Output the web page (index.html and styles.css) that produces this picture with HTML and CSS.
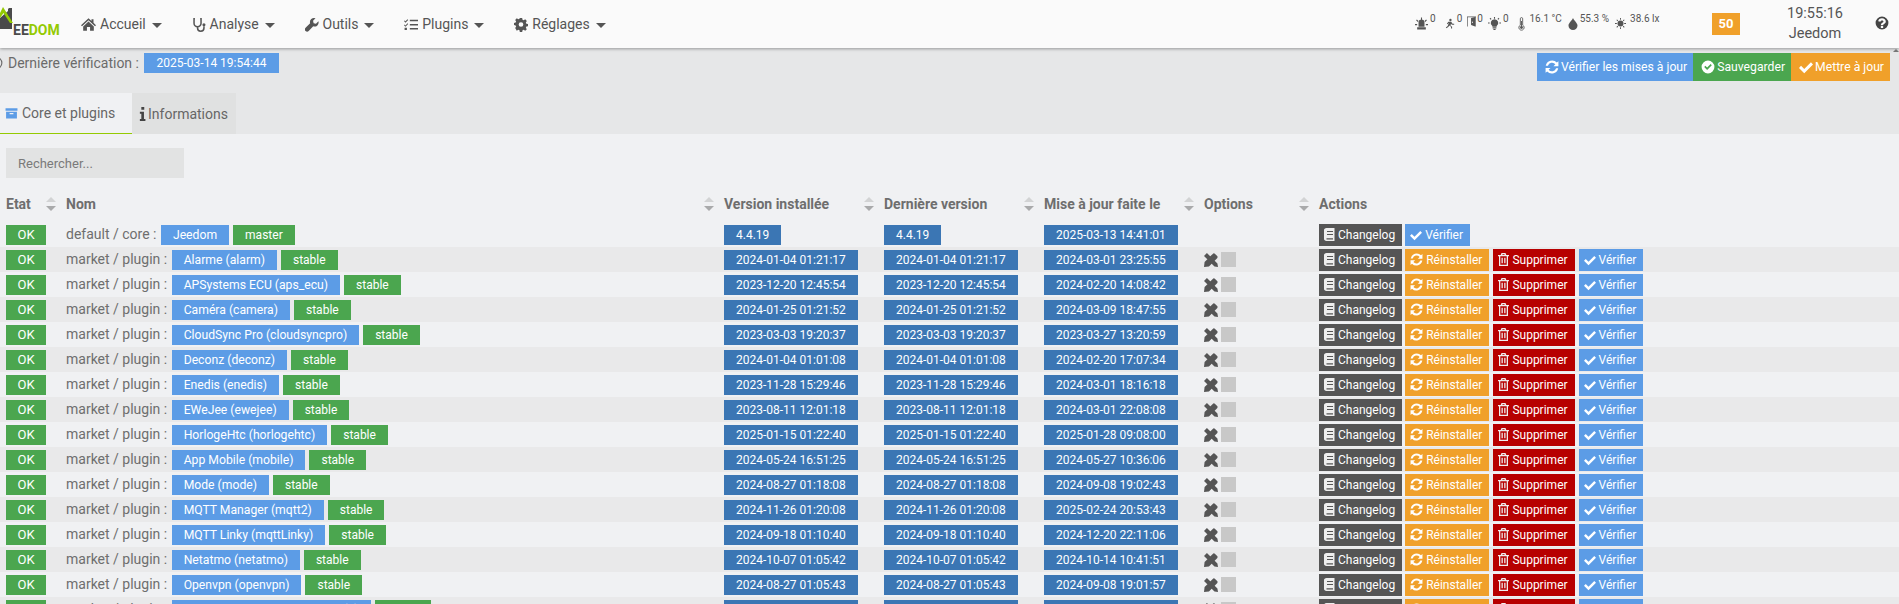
FILE: index.html
```html
<!DOCTYPE html>
<html lang="fr">
<head>
<meta charset="utf-8">
<title>Jeedom - Centre de mise à jour</title>
<link rel="stylesheet" href="styles.css">
</head>
<body>
<svg class="defs" width="0" height="0" aria-hidden="true">
  <defs>
    <symbol id="i-home" viewBox="0 0 24 24"><path d="M12 2 0 13l1.600 1.800L12 5.300l10.400 9.500L24 13l-4-3.700V3.500h-3.200v2.900zM12 7.200 3.500 15v7h6v-6h5v6h6v-7z"/></symbol>
    <symbol id="i-steth" viewBox="0 0 24 24"><path fill="none" stroke="currentColor" stroke-width="2.600" d="M5 2H3.500v8a6 6 0 0 0 12 0V2H14M9.500 16v2a5.500 5.500 0 0 0 11 0v-3"/><circle cx="20.500" cy="12.500" r="2.600"/></symbol>
    <symbol id="i-wrench" viewBox="0 0 24 24"><path d="M23 6.500 18.800 10.700l-4-1-1-4L18 1.300a7 7 0 0 0-9.200 8.600L1 17.700a3.700 3.700 0 0 0 5.300 5.300l7.800-7.800A7 7 0 0 0 23 6.500z"/></symbol>
    <symbol id="i-tasks" viewBox="0 0 24 24"><path d="M10 4h14v2.500H10zM10 11h14v2.500H10zM10 18h14v2.500H10zM1 5l1.500 1.500L6 3l1.200 1.200L2.500 9 0 6.200zM1 12l1.500 1.500L6 10l1.200 1.200-4.700 4.800L0 13.200zM1 17.500h4v4H1z"/></symbol>
    <symbol id="i-cog" viewBox="0 0 24 24"><path fill-rule="evenodd" d="M10 1h4l.6 3 2 .9 2.600-1.700 2.800 2.800-1.700 2.600.9 2 3 .6v3.600l-3 .6-.9 2 1.700 2.600-2.800 2.800-2.600-1.700-2 .9-.6 3h-4l-.6-3-2-.9-2.600 1.700L2 18.100l1.700-2.600-.9-2-3-.6V9.300l3-.6.9-2L2 4.100 4.800 1.300l2.600 1.700 2-.9zM12 8a4 4 0 1 0 0 8 4 4 0 0 0 0-8z"/></symbol>
    <symbol id="i-archive" viewBox="0 0 24 24"><path fill-rule="evenodd" d="M1 3h22v5H1zM2 9.500h20V22H2zM8.500 12v2.500h7V12z"/></symbol>
    <symbol id="i-info" viewBox="0 0 12 24"><path d="M4 0h5v4.500H4zM1.500 8H8.500v12.500H11V24H1.500v-3.500H4V11.500H1.500z"/></symbol>
    <symbol id="i-clock" viewBox="0 0 24 24"><path fill="none" stroke="currentColor" stroke-width="2" d="M12 2a10 10 0 1 0 0 20 10 10 0 0 0 0-20zM12 6v6l4 2"/></symbol>
    <symbol id="i-sync" viewBox="0 0 24 24"><path d="M23 2v8.500h-8.500l3.300-3.300A7.500 7.500 0 0 0 5 10H1.300a11.200 11.200 0 0 1 19-5.700zM1 22v-8.500h8.500l-3.300 3.300A7.500 7.500 0 0 0 19 14h3.700a11.200 11.200 0 0 1-19 5.700z"/></symbol>
    <symbol id="i-check" viewBox="0 0 24 24"><path d="M20.500 4 9 15.500 3.500 10 0 13.500l9 9 15-15z"/></symbol>
    <symbol id="i-check-c" viewBox="0 0 24 24"><path fill-rule="evenodd" d="M12 1a11 11 0 1 0 0 22 11 11 0 0 0 0-22zm6.500 8L10.500 17 5.500 12l2-2 3 3 6-6z"/></symbol>
    <symbol id="i-help" viewBox="0 0 24 24"><path fill-rule="evenodd" d="M12 1a11 11 0 1 0 0 22 11 11 0 0 0 0-22zM10 17h4v3.500h-4zm-4.500-8C5.800 6 8.500 4 12 4c3.800 0 6.500 2.400 6.500 5.300 0 2.300-1.500 3.400-3 4.300-1 .6-1.500 1-1.500 2.400h-4c0-2.600 1-3.700 2.500-4.600 1-.6 2-1.100 2-2.100S13.500 7.500 12 7.500c-1.600 0-2.500 1-2.800 2.200z"/></symbol>
    <symbol id="i-book" viewBox="0 0 22 26"><path fill-rule="evenodd" d="M5 0h16v26H5c-3 0-5-2-5-4.500v-17C0 2 2 0 5 0zm1 6v2h12V6zm0 6v2h12v-2zM5 20.500v2.500h13v-2.500z"/></symbol>
    <symbol id="i-trash" viewBox="0 0 22 26"><path fill-rule="evenodd" d="M7 0h8l1.600 4H22v2.600h-2V26H2V6.600H0V4h5.400zm1.600 4h4.800l-.6-1.400H9.200zM4.600 6.600V23.400h12.800V6.600zM7 9.500h2.600v11H7zm5.400 0H15v11h-2.600z"/></symbol>
    <symbol id="i-tools" viewBox="0 0 24 24"><path d="M0 5 5 0l7 7-5 5zM12 17l5-5 6 6 1 6-6-1zM15 1.500a3 3 0 0 1 4 0l3.500 3.500a3 3 0 0 1 0 4L8.500 23 0 24l1-8.500z"/></symbol>
    <symbol id="i-alarm" viewBox="0 0 24 24"><path d="M6.500 10a5.500 5.500 0 0 1 11 0v8h-11zM4 19h16v4H4zM11 1h2v4h-2zM2 6l1.500-1.500 3 3L5 9zM22 6l-1.500-1.500-3 3L19 9zM0 13h4v2H0zM20 13h4v2h-4z"/></symbol>
    <symbol id="i-run" viewBox="0 0 24 24"><circle cx="13" cy="3.500" r="2.800"/><path d="M8 7.500h7l3 5h4v2.500h-5.500l-2-2.500-1.500 4 4 3v4.500h-2.500V20l-4.500-3-1.500 3-5 3.500-1.500-2L6.500 18 9 10.500H8.500L6.500 13.500 4.500 12.500z"/></symbol>
    <symbol id="i-door" viewBox="0 0 20 24"><path d="M0 1h20v22h-1.500V2.500h-17V23H0z"/><path d="M9 4l9-2v21l-9-3zm2 8v3l2 .4v-3z"/></symbol>
    <symbol id="i-bulb" viewBox="0 0 24 24"><path d="M12 4a7 7 0 0 0-4 12.700V18h8v-1.300A7 7 0 0 0 12 4zM8.500 19h7v2h-7zM10 22h4v2h-4zM11 0h2v3h-2zM3 3l1.500-1.500 2 2L5 5zM21 3l-1.500-1.500-2 2L19 5zM0 10h3v2H0zM21 10h3v2h-3z"/></symbol>
    <symbol id="i-thermo" viewBox="0 0 12 24"><path fill="none" stroke="currentColor" stroke-width="1.500" d="M4 14V3a2 2 0 0 1 4 0v11a4.500 4.500 0 1 1-4 0z"/><circle cx="6" cy="18" r="2.500"/><path d="M5.200 7h1.600v10H5.200z"/></symbol>
    <symbol id="i-drop" viewBox="0 0 20 24"><path d="M10 0c2 5 9 10 9 15a9 9 0 0 1-18 0C1 10 8 5 10 0z"/></symbol>
    <symbol id="i-sun" viewBox="0 0 24 24"><circle cx="12" cy="12" r="6.500"/><path d="M11 0h2v4h-2zM11 20h2v4h-2zM0 11h4v2H0zM20 11h4v2h-4zM3 4.500 4.500 3 7 5.500 5.500 7zM17 18.500l1.500-1.500 2.500 2.500-1.500 1.500zM3 19.500 5.500 17 7 18.500 4.500 21zM17 5.500 19.500 3 21 4.500 18.500 7z"/></symbol>
  </defs>
</svg>

<header class="topbar">
  <div class="brand">
    <svg class="brand-house" viewBox="0 0 20 32" aria-hidden="true"><path fill="#4a4a4a" d="M0 18 8 11V9h4v20H0z"/><path fill="#94ca02" d="M0 13 3 7l10 16h-3L3.500 13 0 18z"/><path fill="#4a4a4a" d="M8.500 8H12v8H8.500z"/></svg>
    <span class="brand-name">EE<em>DOM</em></span>
  </div>
  <nav class="menu">
    <a class="menu-item"><svg class="ic ic-menu ic-first"><use href="#i-home"/></svg>Accueil<i class="caret"></i></a>
    <a class="menu-item"><svg class="ic ic-menu"><use href="#i-steth"/></svg>Analyse<i class="caret"></i></a>
    <a class="menu-item"><svg class="ic ic-menu"><use href="#i-wrench"/></svg>Outils<i class="caret"></i></a>
    <a class="menu-item"><svg class="ic ic-menu"><use href="#i-tasks"/></svg>Plugins<i class="caret"></i></a>
    <a class="menu-item"><svg class="ic ic-menu"><use href="#i-cog"/></svg>Réglages<i class="caret"></i></a>
  </nav>
  <div class="sensors">
    <span class="sensor s-wide"><svg class="ic ic-s"><use href="#i-alarm"/></svg><b>0</b></span>
    <span class="sensor"><svg class="ic ic-run"><use href="#i-run"/></svg><b>0</b></span>
    <span class="sensor"><svg class="ic ic-door"><use href="#i-door"/></svg><b class="tight">0</b></span>
    <span class="sensor s-wide"><svg class="ic ic-s"><use href="#i-bulb"/></svg><b>0</b></span>
    <span class="sensor"><svg class="ic ic-thermo"><use href="#i-thermo"/></svg><b class="loose">16.1 °C</b></span>
    <span class="sensor"><svg class="ic ic-drop"><use href="#i-drop"/></svg><b>55.3 %</b></span>
    <span class="sensor"><svg class="ic ic-sun"><use href="#i-sun"/></svg><b class="mid">38.6 lx</b></span>
  </div>
  <span class="msg-badge">50</span>
  <div class="clock"><span>19:55:16</span><span>Jeedom</span></div>
  <svg class="ic ic-help"><use href="#i-help"/></svg>
</header>

<div class="status-row">
  <div class="last-check">
    <svg class="ic ic-clock"><use href="#i-clock"/></svg>
    <span>Dernière vérification :</span>
    <span class="date-tag">2025-03-14 19:54:44</span>
  </div>
  <div class="top-actions">
    <a class="top-btn blue"><svg class="ic"><use href="#i-sync"/></svg>Vérifier les mises à jour</a>
    <a class="top-btn green"><svg class="ic"><use href="#i-check-c"/></svg>Sauvegarder</a>
    <a class="top-btn orange"><svg class="ic"><use href="#i-check"/></svg>Mettre à jour</a>
  </div>
</div>
<i class="scroll-arrow"></i>

<div class="tabs">
  <a class="tab active"><svg class="ic ic-archive"><use href="#i-archive"/></svg>Core et plugins</a>
  <a class="tab"><svg class="ic ic-info"><use href="#i-info"/></svg>Informations</a>
</div>

<main class="pane">
  <input class="search" type="text" placeholder="Rechercher...">
  <table class="updates">
    <colgroup>
      <col class="c-state"><col class="c-name"><col class="c-date"><col class="c-date"><col class="c-date"><col class="c-opt"><col>
    </colgroup>
    <thead>
      <tr>
        <th><div class="th-in">Etat<i class="sort"></i></div></th>
        <th><div class="th-in">Nom<i class="sort"></i></div></th>
        <th><div class="th-in">Version installée<i class="sort"></i></div></th>
        <th><div class="th-in">Dernière version<i class="sort"></i></div></th>
        <th><div class="th-in">Mise à jour faite le<i class="sort"></i></div></th>
        <th><div class="th-in">Options<i class="sort"></i></div></th>
        <th><div class="th-in">Actions</div></th>
      </tr>
    </thead>
    <tbody>
      <tr>
        <td><span class="tag ok">OK</span></td>
        <td>default / core : <span class="tag blue">Jeedom</span><span class="tag green">master</span></td>
        <td><span class="tag steel">4.4.19</span></td>
        <td><span class="tag steel">4.4.19</span></td>
        <td><span class="tag steel">2025-03-13 14:41:01</span></td>
        <td></td>
        <td><a class="btn dark"><svg class="ic ic-tall"><use href="#i-book"/></svg>Changelog</a><a class="btn blue"><svg class="ic"><use href="#i-check"/></svg>Vérifier</a></td>
      </tr>
      <tr>
        <td><span class="tag ok">OK</span></td>
        <td>market / plugin : <span class="tag blue">Alarme (alarm)</span><span class="tag green">stable</span></td>
        <td><span class="tag steel">2024-01-04 01:21:17</span></td>
        <td><span class="tag steel">2024-01-04 01:21:17</span></td>
        <td><span class="tag steel">2024-03-01 23:25:55</span></td>
        <td><div class="opts"><svg class="ic ic-tools"><use href="#i-tools"/></svg><i class="box"></i></div></td>
        <td><a class="btn dark"><svg class="ic ic-tall"><use href="#i-book"/></svg>Changelog</a><a class="btn orange"><svg class="ic ic-sync"><use href="#i-sync"/></svg>Réinstaller</a><a class="btn red"><svg class="ic ic-tall"><use href="#i-trash"/></svg>Supprimer</a><a class="btn blue"><svg class="ic"><use href="#i-check"/></svg>Vérifier</a></td>
      </tr>
      <tr>
        <td><span class="tag ok">OK</span></td>
        <td>market / plugin : <span class="tag blue">APSystems ECU (aps_ecu)</span><span class="tag green">stable</span></td>
        <td><span class="tag steel">2023-12-20 12:45:54</span></td>
        <td><span class="tag steel">2023-12-20 12:45:54</span></td>
        <td><span class="tag steel">2024-02-20 14:08:42</span></td>
        <td><div class="opts"><svg class="ic ic-tools"><use href="#i-tools"/></svg><i class="box"></i></div></td>
        <td><a class="btn dark"><svg class="ic ic-tall"><use href="#i-book"/></svg>Changelog</a><a class="btn orange"><svg class="ic ic-sync"><use href="#i-sync"/></svg>Réinstaller</a><a class="btn red"><svg class="ic ic-tall"><use href="#i-trash"/></svg>Supprimer</a><a class="btn blue"><svg class="ic"><use href="#i-check"/></svg>Vérifier</a></td>
      </tr>
      <tr>
        <td><span class="tag ok">OK</span></td>
        <td>market / plugin : <span class="tag blue">Caméra (camera)</span><span class="tag green">stable</span></td>
        <td><span class="tag steel">2024-01-25 01:21:52</span></td>
        <td><span class="tag steel">2024-01-25 01:21:52</span></td>
        <td><span class="tag steel">2024-03-09 18:47:55</span></td>
        <td><div class="opts"><svg class="ic ic-tools"><use href="#i-tools"/></svg><i class="box"></i></div></td>
        <td><a class="btn dark"><svg class="ic ic-tall"><use href="#i-book"/></svg>Changelog</a><a class="btn orange"><svg class="ic ic-sync"><use href="#i-sync"/></svg>Réinstaller</a><a class="btn red"><svg class="ic ic-tall"><use href="#i-trash"/></svg>Supprimer</a><a class="btn blue"><svg class="ic"><use href="#i-check"/></svg>Vérifier</a></td>
      </tr>
      <tr>
        <td><span class="tag ok">OK</span></td>
        <td>market / plugin : <span class="tag blue">CloudSync Pro (cloudsyncpro)</span><span class="tag green">stable</span></td>
        <td><span class="tag steel">2023-03-03 19:20:37</span></td>
        <td><span class="tag steel">2023-03-03 19:20:37</span></td>
        <td><span class="tag steel">2023-03-27 13:20:59</span></td>
        <td><div class="opts"><svg class="ic ic-tools"><use href="#i-tools"/></svg><i class="box"></i></div></td>
        <td><a class="btn dark"><svg class="ic ic-tall"><use href="#i-book"/></svg>Changelog</a><a class="btn orange"><svg class="ic ic-sync"><use href="#i-sync"/></svg>Réinstaller</a><a class="btn red"><svg class="ic ic-tall"><use href="#i-trash"/></svg>Supprimer</a><a class="btn blue"><svg class="ic"><use href="#i-check"/></svg>Vérifier</a></td>
      </tr>
      <tr>
        <td><span class="tag ok">OK</span></td>
        <td>market / plugin : <span class="tag blue">Deconz (deconz)</span><span class="tag green">stable</span></td>
        <td><span class="tag steel">2024-01-04 01:01:08</span></td>
        <td><span class="tag steel">2024-01-04 01:01:08</span></td>
        <td><span class="tag steel">2024-02-20 17:07:34</span></td>
        <td><div class="opts"><svg class="ic ic-tools"><use href="#i-tools"/></svg><i class="box"></i></div></td>
        <td><a class="btn dark"><svg class="ic ic-tall"><use href="#i-book"/></svg>Changelog</a><a class="btn orange"><svg class="ic ic-sync"><use href="#i-sync"/></svg>Réinstaller</a><a class="btn red"><svg class="ic ic-tall"><use href="#i-trash"/></svg>Supprimer</a><a class="btn blue"><svg class="ic"><use href="#i-check"/></svg>Vérifier</a></td>
      </tr>
      <tr>
        <td><span class="tag ok">OK</span></td>
        <td>market / plugin : <span class="tag blue">Enedis (enedis)</span><span class="tag green">stable</span></td>
        <td><span class="tag steel">2023-11-28 15:29:46</span></td>
        <td><span class="tag steel">2023-11-28 15:29:46</span></td>
        <td><span class="tag steel">2024-03-01 18:16:18</span></td>
        <td><div class="opts"><svg class="ic ic-tools"><use href="#i-tools"/></svg><i class="box"></i></div></td>
        <td><a class="btn dark"><svg class="ic ic-tall"><use href="#i-book"/></svg>Changelog</a><a class="btn orange"><svg class="ic ic-sync"><use href="#i-sync"/></svg>Réinstaller</a><a class="btn red"><svg class="ic ic-tall"><use href="#i-trash"/></svg>Supprimer</a><a class="btn blue"><svg class="ic"><use href="#i-check"/></svg>Vérifier</a></td>
      </tr>
      <tr>
        <td><span class="tag ok">OK</span></td>
        <td>market / plugin : <span class="tag blue">EWeJee (ewejee)</span><span class="tag green">stable</span></td>
        <td><span class="tag steel">2023-08-11 12:01:18</span></td>
        <td><span class="tag steel">2023-08-11 12:01:18</span></td>
        <td><span class="tag steel">2024-03-01 22:08:08</span></td>
        <td><div class="opts"><svg class="ic ic-tools"><use href="#i-tools"/></svg><i class="box"></i></div></td>
        <td><a class="btn dark"><svg class="ic ic-tall"><use href="#i-book"/></svg>Changelog</a><a class="btn orange"><svg class="ic ic-sync"><use href="#i-sync"/></svg>Réinstaller</a><a class="btn red"><svg class="ic ic-tall"><use href="#i-trash"/></svg>Supprimer</a><a class="btn blue"><svg class="ic"><use href="#i-check"/></svg>Vérifier</a></td>
      </tr>
      <tr>
        <td><span class="tag ok">OK</span></td>
        <td>market / plugin : <span class="tag blue">HorlogeHtc (horlogehtc)</span><span class="tag green">stable</span></td>
        <td><span class="tag steel">2025-01-15 01:22:40</span></td>
        <td><span class="tag steel">2025-01-15 01:22:40</span></td>
        <td><span class="tag steel">2025-01-28 09:08:00</span></td>
        <td><div class="opts"><svg class="ic ic-tools"><use href="#i-tools"/></svg><i class="box"></i></div></td>
        <td><a class="btn dark"><svg class="ic ic-tall"><use href="#i-book"/></svg>Changelog</a><a class="btn orange"><svg class="ic ic-sync"><use href="#i-sync"/></svg>Réinstaller</a><a class="btn red"><svg class="ic ic-tall"><use href="#i-trash"/></svg>Supprimer</a><a class="btn blue"><svg class="ic"><use href="#i-check"/></svg>Vérifier</a></td>
      </tr>
      <tr>
        <td><span class="tag ok">OK</span></td>
        <td>market / plugin : <span class="tag blue">App Mobile (mobile)</span><span class="tag green">stable</span></td>
        <td><span class="tag steel">2024-05-24 16:51:25</span></td>
        <td><span class="tag steel">2024-05-24 16:51:25</span></td>
        <td><span class="tag steel">2024-05-27 10:36:06</span></td>
        <td><div class="opts"><svg class="ic ic-tools"><use href="#i-tools"/></svg><i class="box"></i></div></td>
        <td><a class="btn dark"><svg class="ic ic-tall"><use href="#i-book"/></svg>Changelog</a><a class="btn orange"><svg class="ic ic-sync"><use href="#i-sync"/></svg>Réinstaller</a><a class="btn red"><svg class="ic ic-tall"><use href="#i-trash"/></svg>Supprimer</a><a class="btn blue"><svg class="ic"><use href="#i-check"/></svg>Vérifier</a></td>
      </tr>
      <tr>
        <td><span class="tag ok">OK</span></td>
        <td>market / plugin : <span class="tag blue">Mode (mode)</span><span class="tag green">stable</span></td>
        <td><span class="tag steel">2024-08-27 01:18:08</span></td>
        <td><span class="tag steel">2024-08-27 01:18:08</span></td>
        <td><span class="tag steel">2024-09-08 19:02:43</span></td>
        <td><div class="opts"><svg class="ic ic-tools"><use href="#i-tools"/></svg><i class="box"></i></div></td>
        <td><a class="btn dark"><svg class="ic ic-tall"><use href="#i-book"/></svg>Changelog</a><a class="btn orange"><svg class="ic ic-sync"><use href="#i-sync"/></svg>Réinstaller</a><a class="btn red"><svg class="ic ic-tall"><use href="#i-trash"/></svg>Supprimer</a><a class="btn blue"><svg class="ic"><use href="#i-check"/></svg>Vérifier</a></td>
      </tr>
      <tr>
        <td><span class="tag ok">OK</span></td>
        <td>market / plugin : <span class="tag blue">MQTT Manager (mqtt2)</span><span class="tag green">stable</span></td>
        <td><span class="tag steel">2024-11-26 01:20:08</span></td>
        <td><span class="tag steel">2024-11-26 01:20:08</span></td>
        <td><span class="tag steel">2025-02-24 20:53:43</span></td>
        <td><div class="opts"><svg class="ic ic-tools"><use href="#i-tools"/></svg><i class="box"></i></div></td>
        <td><a class="btn dark"><svg class="ic ic-tall"><use href="#i-book"/></svg>Changelog</a><a class="btn orange"><svg class="ic ic-sync"><use href="#i-sync"/></svg>Réinstaller</a><a class="btn red"><svg class="ic ic-tall"><use href="#i-trash"/></svg>Supprimer</a><a class="btn blue"><svg class="ic"><use href="#i-check"/></svg>Vérifier</a></td>
      </tr>
      <tr>
        <td><span class="tag ok">OK</span></td>
        <td>market / plugin : <span class="tag blue">MQTT Linky (mqttLinky)</span><span class="tag green">stable</span></td>
        <td><span class="tag steel">2024-09-18 01:10:40</span></td>
        <td><span class="tag steel">2024-09-18 01:10:40</span></td>
        <td><span class="tag steel">2024-12-20 22:11:06</span></td>
        <td><div class="opts"><svg class="ic ic-tools"><use href="#i-tools"/></svg><i class="box"></i></div></td>
        <td><a class="btn dark"><svg class="ic ic-tall"><use href="#i-book"/></svg>Changelog</a><a class="btn orange"><svg class="ic ic-sync"><use href="#i-sync"/></svg>Réinstaller</a><a class="btn red"><svg class="ic ic-tall"><use href="#i-trash"/></svg>Supprimer</a><a class="btn blue"><svg class="ic"><use href="#i-check"/></svg>Vérifier</a></td>
      </tr>
      <tr>
        <td><span class="tag ok">OK</span></td>
        <td>market / plugin : <span class="tag blue">Netatmo (netatmo)</span><span class="tag green">stable</span></td>
        <td><span class="tag steel">2024-10-07 01:05:42</span></td>
        <td><span class="tag steel">2024-10-07 01:05:42</span></td>
        <td><span class="tag steel">2024-10-14 10:41:51</span></td>
        <td><div class="opts"><svg class="ic ic-tools"><use href="#i-tools"/></svg><i class="box"></i></div></td>
        <td><a class="btn dark"><svg class="ic ic-tall"><use href="#i-book"/></svg>Changelog</a><a class="btn orange"><svg class="ic ic-sync"><use href="#i-sync"/></svg>Réinstaller</a><a class="btn red"><svg class="ic ic-tall"><use href="#i-trash"/></svg>Supprimer</a><a class="btn blue"><svg class="ic"><use href="#i-check"/></svg>Vérifier</a></td>
      </tr>
      <tr>
        <td><span class="tag ok">OK</span></td>
        <td>market / plugin : <span class="tag blue">Openvpn (openvpn)</span><span class="tag green">stable</span></td>
        <td><span class="tag steel">2024-08-27 01:05:43</span></td>
        <td><span class="tag steel">2024-08-27 01:05:43</span></td>
        <td><span class="tag steel">2024-09-08 19:01:57</span></td>
        <td><div class="opts"><svg class="ic ic-tools"><use href="#i-tools"/></svg><i class="box"></i></div></td>
        <td><a class="btn dark"><svg class="ic ic-tall"><use href="#i-book"/></svg>Changelog</a><a class="btn orange"><svg class="ic ic-sync"><use href="#i-sync"/></svg>Réinstaller</a><a class="btn red"><svg class="ic ic-tall"><use href="#i-trash"/></svg>Supprimer</a><a class="btn blue"><svg class="ic"><use href="#i-check"/></svg>Vérifier</a></td>
      </tr>
      <tr>
        <td><span class="tag ok">OK</span></td>
        <td>market / plugin : <span class="tag blue">Philips Hue Bridges Manager (p)</span><span class="tag green">stable</span></td>
        <td><span class="tag steel">2024-08-27 01:05:43</span></td>
        <td><span class="tag steel">2024-08-27 01:05:43</span></td>
        <td><span class="tag steel">2024-09-08 19:01:57</span></td>
        <td><div class="opts"><svg class="ic ic-tools"><use href="#i-tools"/></svg><i class="box"></i></div></td>
        <td><a class="btn dark"><svg class="ic ic-tall"><use href="#i-book"/></svg>Changelog</a><a class="btn orange"><svg class="ic ic-sync"><use href="#i-sync"/></svg>Réinstaller</a><a class="btn red"><svg class="ic ic-tall"><use href="#i-trash"/></svg>Supprimer</a><a class="btn blue"><svg class="ic"><use href="#i-check"/></svg>Vérifier</a></td>
      </tr>
    </tbody>
  </table>
</main>
</body>
</html>
```

FILE: styles.css
```css
* { box-sizing: border-box; }
html, body { margin: 0; height: 604px; overflow: hidden; }
body {
  position: relative;
  background: #e6e7e8;
  font-family: Roboto, "Liberation Sans", sans-serif;
  font-size: 14px;
  color: #6b6b6b;
}
.defs { position: absolute; }
.ic { width: 12px; height: 12px; fill: currentColor; flex: none; }

/* top bar */
.topbar {
  display: flex;
  align-items: center;
  height: 48px;
  background: #fafafa;
  box-shadow: 0 1px 3px rgba(0, 0, 0, .35);
  position: relative;
  color: #555;
}
.brand { position: relative; width: 81px; height: 48px; flex: none; overflow: hidden; }
.brand-house { position: absolute; left: 0; top: 0; width: 20px; height: 32px; }
.brand-name { position: absolute; left: 13px; top: 22px; font-weight: 700; font-size: 14px; line-height: 16px; color: #4a4a4a; }
.brand-name em { font-style: normal; color: #94ca02; }
.menu { display: flex; gap: 29.800px; width: 1334px; flex: none; }
.menu-item { display: flex; align-items: center; }
.ic-menu { width: 14px; height: 15px; margin-right: 4px; }
.ic-first { width: 15px; }
.caret { width: 0; height: 0; margin-left: 6px; margin-top: 2px; border-style: solid; border-width: 5px 5px 0; border-color: #555 transparent transparent; }
.sensors { display: flex; width: 297px; height: 20px; flex: none; font-size: 10px; }
.sensor { display: flex; align-items: flex-start; margin-right: 5px; }
.s-wide { margin-right: 9px; }
.sensor b { font-weight: 400; margin-left: 2px; margin-top: -1px; }
.sensor b.tight { margin-left: 1px; }
.sensor b.loose { margin-left: 5px; }
.sensor b.mid { margin-left: 4px; }
.ic-s { width: 13px; height: 15px; margin-top: 2px; }
.ic-run { width: 10px; height: 13px; margin-top: 3px; }
.ic-door { width: 9px; height: 13px; margin-top: 1px; }
.ic-thermo { width: 7px; height: 16px; margin-top: 2px; }
.ic-drop { width: 10px; height: 14px; margin-top: 3px; margin-left: 1px; }
.ic-sun { width: 11px; height: 13px; margin-top: 3px; margin-left: 1px; }
.msg-badge { width: 28px; height: 22px; line-height: 22px; text-align: center; background: #f0a02a; color: #fff; font-weight: 700; font-size: 13px; flex: none; }
.clock { display: flex; flex-direction: column; align-items: center; width: 100px; line-height: 20px; flex: none; margin-left: 25px; font-size: 14.500px; margin-top: -1px; }
.ic-help { width: 14px; height: 14px; margin-left: 10px; color: #444; margin-top: -3px; }

/* status row */
.status-row { display: flex; justify-content: space-between; align-items: flex-start; padding: 5px 9px 0 0; height: 45px; }
.last-check { display: flex; align-items: center; height: 20px; }
.ic-clock { width: 14px; height: 14px; margin-left: -11px; margin-right: 5px; }
.date-tag { margin-left: 5px; width: 135px; height: 20px; line-height: 20px; text-align: center; background: #5c9ce6; color: #fff; font-size: 12px; }
.top-actions { display: flex; }
.top-btn { display: flex; align-items: center; gap: 2px; height: 28px; padding: 0 6px 0 8px; color: #fff; font-size: 12.200px; }
.top-btn .ic { width: 14px; height: 14px; }
.top-btn.blue { background: #5c9ce6; }
.top-btn.green { background: #4ba64f; }
.top-btn.orange { background: #f0a02a; }
.scroll-arrow { position: absolute; right: 0; top: 49px; width: 0; height: 0; border-style: solid; border-width: 0 3px 3px; border-color: transparent transparent #777; }

/* tabs */
.tabs { display: flex; height: 41px; }
.tab { display: flex; align-items: center; padding: 0 5px; gap: 4px; background: #e0e1e1; color: #666; }
.tab.active { width: 132px; background: #f0f1f3; border-bottom: 1px solid #94ca02; }
.tab:not(.active) { width: 104px; padding-left: 7px; gap: 2px; }
.ic-archive { width: 13px; height: 14px; color: #5c9ce6; }
.ic-info { width: 7px; height: 14px; color: #444; }

/* pane */
.pane { background: #f0f1f3; padding: 14px 0 0; height: 470px; }
.search { display: block; margin-left: 6px; width: 178px; height: 30px; padding: 0 12px; border: 0; background: #e2e3e3; font: 13px Roboto, sans-serif; color: #555; }
.search::placeholder { color: #7a7a7a; opacity: 1; }

/* table */
.updates { margin-top: 8px; width: 100%; table-layout: fixed; border-collapse: collapse; }
.c-state { width: 60px; }
.c-name { width: 658px; }
.c-date { width: 160px; }
.c-opt { width: 115px; }
.updates th { height: 36px; padding: 0 4px 0 6px; text-align: left; font-size: 14px; font-weight: 700; color: #6e6e6e; }
.th-in { display: flex; justify-content: space-between; align-items: center; }
.sort { position: relative; width: 10px; height: 14px; flex: none; }
.sort::before, .sort::after { content: ""; position: absolute; left: 0; width: 0; height: 0; border-style: solid; }
.sort::before { top: 0; border-width: 0 5px 5px; border-color: transparent transparent #d2d3d4; }
.sort::after { bottom: 0; border-width: 5px 5px 0; border-color: #a9aaab transparent transparent; }
.updates td { height: 25px; padding: 0 6px; vertical-align: middle; font-size: 14px; white-space: nowrap; color: #6e6e6e; }
.updates tbody tr:nth-child(odd) { background: #f0f1f3; }
.updates tbody tr:nth-child(even) { background: #e9e9ea; }

.tag { display: inline-block; height: 20px; padding: 0 12px; line-height: 20px; margin-right: 4px; font-size: 12px; color: #fff; vertical-align: middle; }
.tag.ok { width: 40px; padding: 0; text-align: center; margin-right: 0; background: #4ba64f; font-size: 13px; }
.tag.blue { margin-left: 1px; background: #5c9ce6; font-size: 12.200px; }
.tag.green { background: #4ba64f; }
.tag.steel { background: #3b76b4; }

.opts { display: flex; align-items: center; gap: 3px; }
.ic-tools { width: 14px; height: 14px; color: #555; }
.box { width: 15px; height: 15px; background: #c8c8c8; }

.btn { display: inline-flex; align-items: center; gap: 3px; height: 22px; padding: 0 7px 0 5px; margin-right: 4px; font-size: 12px; color: #fff; vertical-align: middle; }
.btn .ic { width: 12px; height: 12px; }
.btn .ic-tall { width: 11px; height: 13px; color: #eee; }
.btn .ic-sync { width: 13px; height: 13px; }
.btn.dark { background: #555; margin-right: 3px; }
.btn.orange { background: #f0a02a; }
.btn.red { background: #b70000; }
.btn.blue { background: #5c9ce6; }
```
